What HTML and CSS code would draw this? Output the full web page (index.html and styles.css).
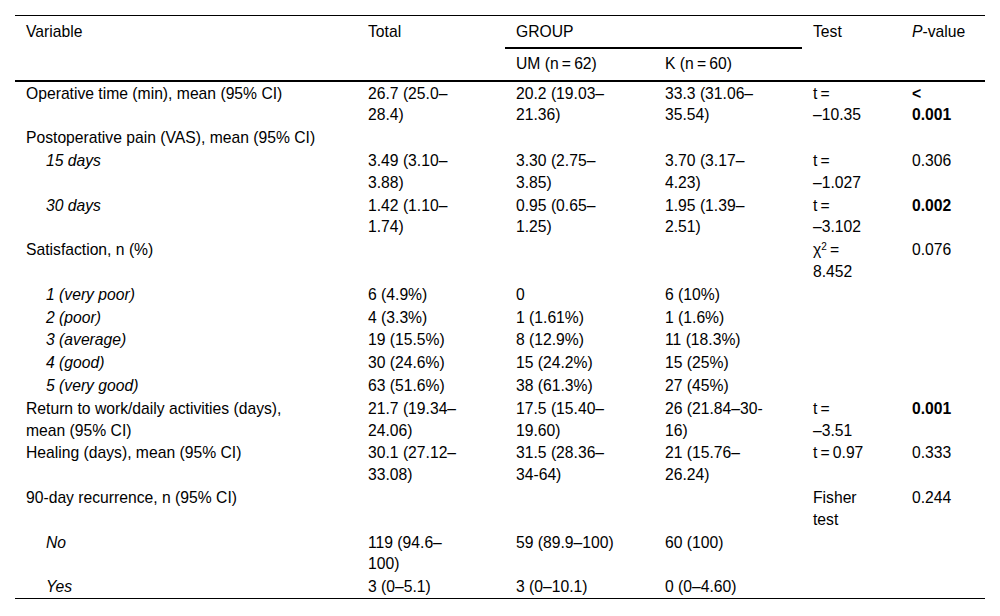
FILE: index.html
```html
<!DOCTYPE html>
<html lang="en">
<head>
<meta charset="utf-8">
<title>Outcomes table</title>
<link rel="stylesheet" href="styles.css">
</head>
<body>
<table class="data">
  <colgroup>
    <col class="c-var">
    <col class="c-total">
    <col class="c-um">
    <col class="c-k">
    <col class="c-test">
    <col class="c-p">
  </colgroup>
  <thead>
    <tr class="head-1">
      <th rowspan="2">Variable</th>
      <th rowspan="2">Total</th>
      <th colspan="2" class="group">GROUP</th>
      <th rowspan="2">Test</th>
      <th rowspan="2"><i>P</i>-value</th>
    </tr>
    <tr class="head-2">
      <th>UM (n&#8201;=&#8201;62)</th>
      <th>K (n&#8201;=&#8201;60)</th>
    </tr>
  </thead>
  <tbody>
    <tr>
      <td>Operative time (min), mean (95% CI)</td>
      <td>26.7 (25.0–<br>28.4)</td>
      <td>20.2 (19.03–<br>21.36)</td>
      <td>33.3 (31.06–<br>35.54)</td>
      <td>t&#8201;=<br>–10.35</td>
      <td><b>&lt;<br>0.001</b></td>
    </tr>
    <tr>
      <td>Postoperative pain (VAS), mean (95% CI)</td>
      <td></td><td></td><td></td><td></td><td></td>
    </tr>
    <tr>
      <td class="sub">15 days</td>
      <td>3.49 (3.10–<br>3.88)</td>
      <td>3.30 (2.75–<br>3.85)</td>
      <td>3.70 (3.17–<br>4.23)</td>
      <td>t&#8201;=<br>–1.027</td>
      <td>0.306</td>
    </tr>
    <tr>
      <td class="sub">30 days</td>
      <td>1.42 (1.10–<br>1.74)</td>
      <td>0.95 (0.65–<br>1.25)</td>
      <td>1.95 (1.39–<br>2.51)</td>
      <td>t&#8201;=<br>–3.102</td>
      <td><b>0.002</b></td>
    </tr>
    <tr>
      <td>Satisfaction, n (%)</td>
      <td></td><td></td><td></td>
      <td>χ<sup>2</sup>&#8201;=<br>8.452</td>
      <td>0.076</td>
    </tr>
    <tr>
      <td class="sub">1 (very poor)</td>
      <td>6 (4.9%)</td><td>0</td><td>6 (10%)</td><td></td><td></td>
    </tr>
    <tr>
      <td class="sub">2 (poor)</td>
      <td>4 (3.3%)</td><td>1 (1.61%)</td><td>1 (1.6%)</td><td></td><td></td>
    </tr>
    <tr>
      <td class="sub">3 (average)</td>
      <td>19 (15.5%)</td><td>8 (12.9%)</td><td>11 (18.3%)</td><td></td><td></td>
    </tr>
    <tr>
      <td class="sub">4 (good)</td>
      <td>30 (24.6%)</td><td>15 (24.2%)</td><td>15 (25%)</td><td></td><td></td>
    </tr>
    <tr>
      <td class="sub">5 (very good)</td>
      <td>63 (51.6%)</td><td>38 (61.3%)</td><td>27 (45%)</td><td></td><td></td>
    </tr>
    <tr>
      <td>Return to work/daily activities (days),<br>mean (95% CI)</td>
      <td>21.7 (19.34–<br>24.06)</td>
      <td>17.5 (15.40–<br>19.60)</td>
      <td>26 (21.84–30-<br>16)</td>
      <td>t&#8201;=<br>–3.51</td>
      <td><b>0.001</b></td>
    </tr>
    <tr>
      <td>Healing (days), mean (95% CI)</td>
      <td>30.1 (27.12–<br>33.08)</td>
      <td>31.5 (28.36–<br>34-64)</td>
      <td>21 (15.76–<br>26.24)</td>
      <td>t&#8201;=&#8201;0.97</td>
      <td>0.333</td>
    </tr>
    <tr>
      <td>90-day recurrence, n (95% CI)</td>
      <td></td><td></td><td></td>
      <td>Fisher<br>test</td>
      <td>0.244</td>
    </tr>
    <tr>
      <td class="sub">No</td>
      <td>119 (94.6–<br>100)</td>
      <td>59 (89.9–100)</td>
      <td>60 (100)</td>
      <td></td><td></td>
    </tr>
    <tr>
      <td class="sub">Yes</td>
      <td>3 (0–5.1)</td>
      <td>3 (0–10.1)</td>
      <td>0 (0–4.60)</td>
      <td></td><td></td>
    </tr>
  </tbody>
</table>
</body>
</html>
```

FILE: styles.css
```css
html, body {
  margin: 0;
  padding: 0;
  background: #ffffff;
}

body {
  font-family: "Liberation Sans", Arial, Helvetica, sans-serif;
  font-size: 15.7px;
  color: #000000;
}

.data {
  width: 970px;
  margin: 15px 15px 0 15px;
  border-collapse: collapse;
  table-layout: fixed;
  border-top: 1px solid #000;
  border-bottom: 1px solid #000;
}

.c-var { width: 342px; }
.c-total { width: 148px; }
.c-um { width: 149px; }
.c-k { width: 148px; }
.c-test { width: 99px; }
.c-p { width: 84px; }

.data th,
.data td {
  text-align: left;
  vertical-align: top;
  white-space: nowrap;
  line-height: 21.8px;
  font-weight: normal;
}

.data th {
  padding: 4.5px 6px 4.5px 11px;
}

.data td {
  padding: 1px 6px 0 11px;
}

.data thead tr.head-2 th {
  border-bottom: 2px solid #000;
}

.data thead tr.head-1 th[rowspan] {
  border-bottom: 2px solid #000;
}

.data th.group {
  border-bottom: 2px solid #000;
}

.data td.sub {
  padding-left: 31px;
  font-style: italic;
}

.data b {
  font-weight: bold;
}

.data sup {
  font-size: 10px;
  line-height: 0;
  vertical-align: 5px;
}
```
